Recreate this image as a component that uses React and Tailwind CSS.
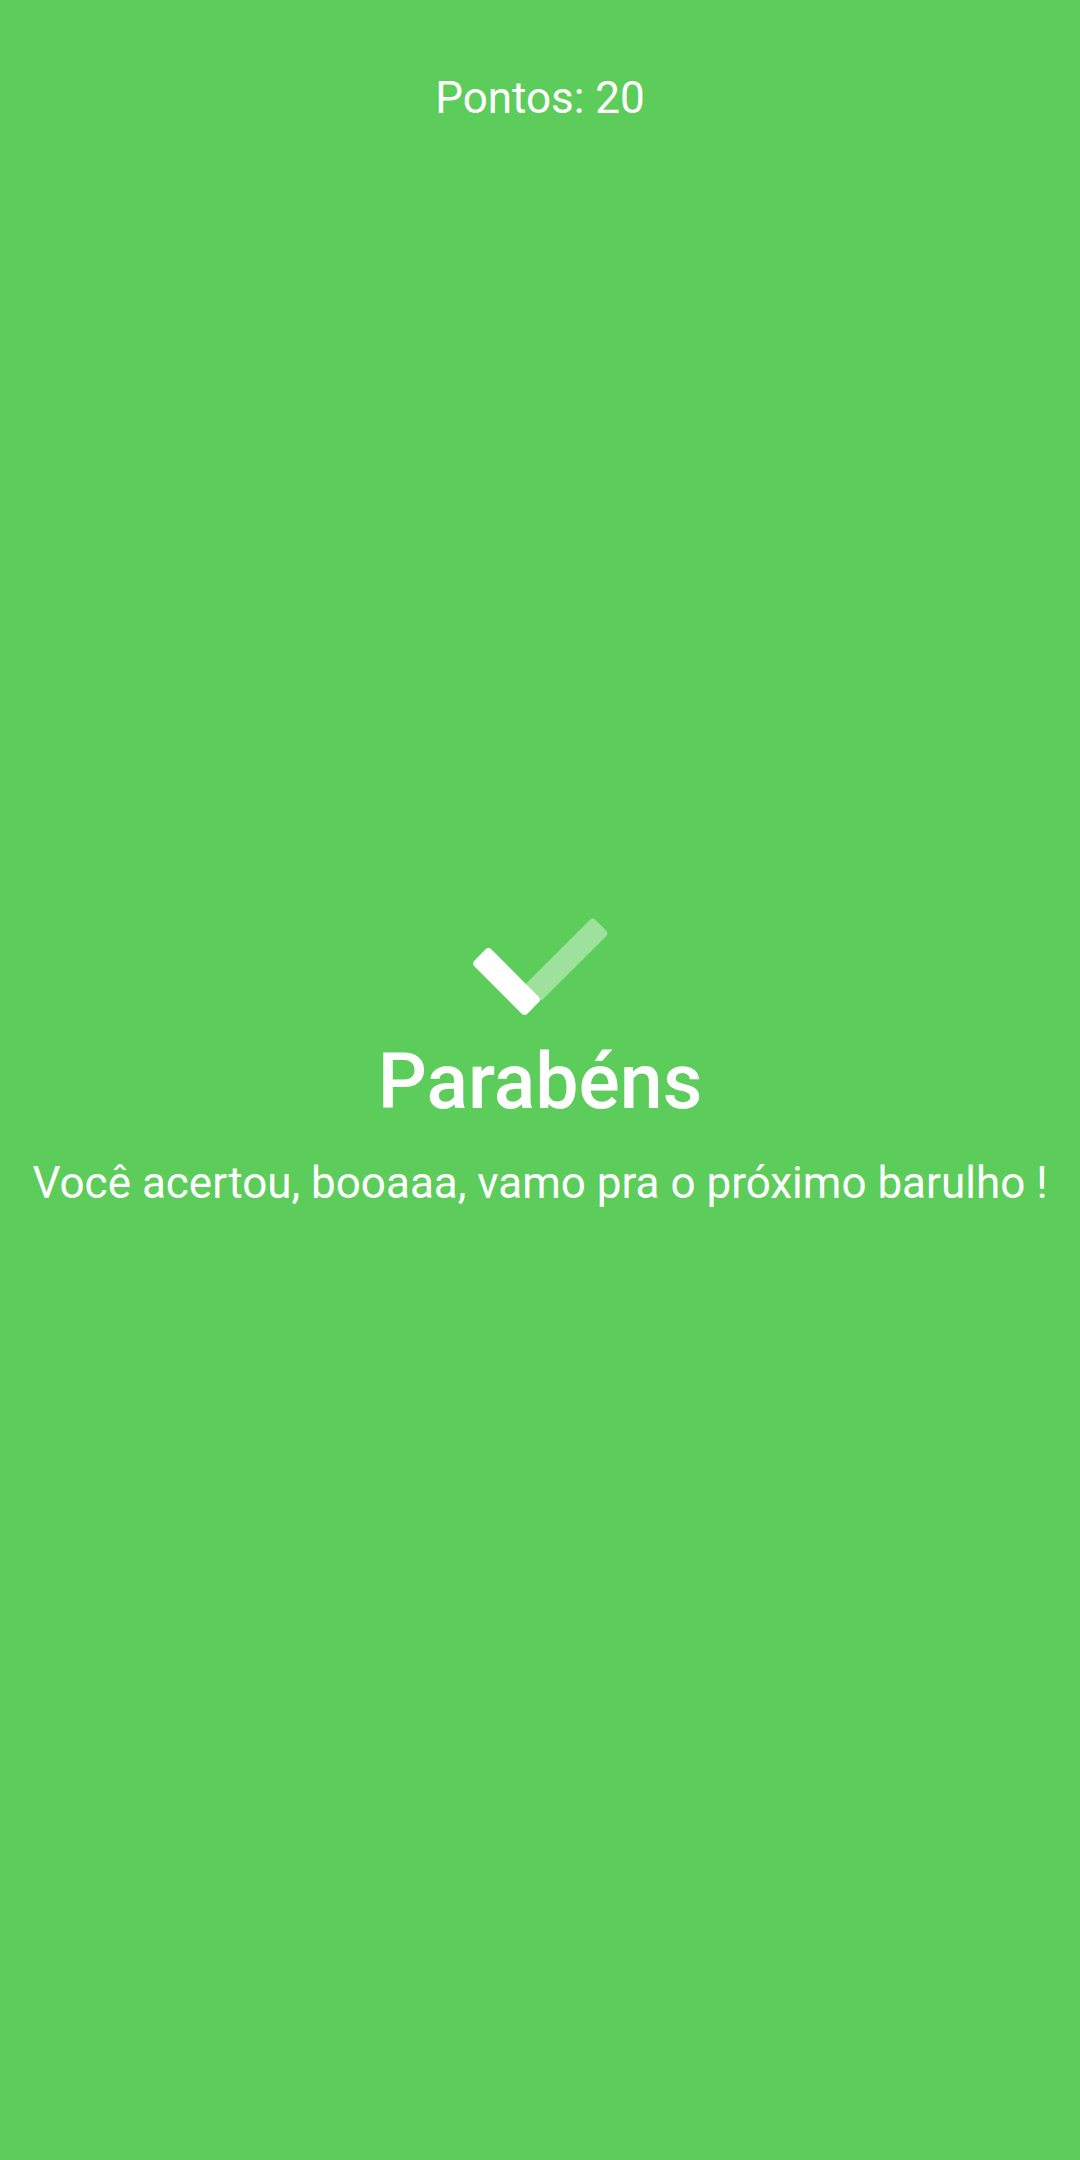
import React from 'react';

const Check = () => (
  <svg width="145" height="110" viewBox="470 910 145 110" className="block">
    {/* long arm, faded */}
    <rect
      x={569.5 - 48.5}
      y={959.5 - 11.5}
      width="97"
      height="23"
      rx="4"
      fill="#ffffff"
      fillOpacity="0.4"
      transform="rotate(-45 569.5 959.5)"
    />
    {/* short arm */}
    <rect
      x={509.5 - 37.5}
      y={981.5 - 12}
      width="75"
      height="24"
      rx="4"
      fill="#ffffff"
      transform="rotate(45 509.5 981.5)"
    />
  </svg>
);

export default function App() {
  return (
    <div
      className="w-[1080px] h-[2160px] bg-[#5ccd5a] text-white flex flex-col items-center"
      style={{ fontFamily: 'Roboto, "Noto Sans", sans-serif' }}
    >
      {/* Score */}
      <div className="pt-[72px] text-[44px] leading-[52px]">Pontos: 20</div>

      {/* Result */}
      <div className="mt-[786px] flex flex-col items-center">
        <Check />
        <h1 className="mt-[17px] text-[77px] leading-[90px] font-medium">Parabéns</h1>
        <p className="mt-[30px] text-[44px] leading-[52px] whitespace-nowrap">
          Você acertou, booaaa, vamo pra o próximo barulho !
        </p>
      </div>
    </div>
  );
}
